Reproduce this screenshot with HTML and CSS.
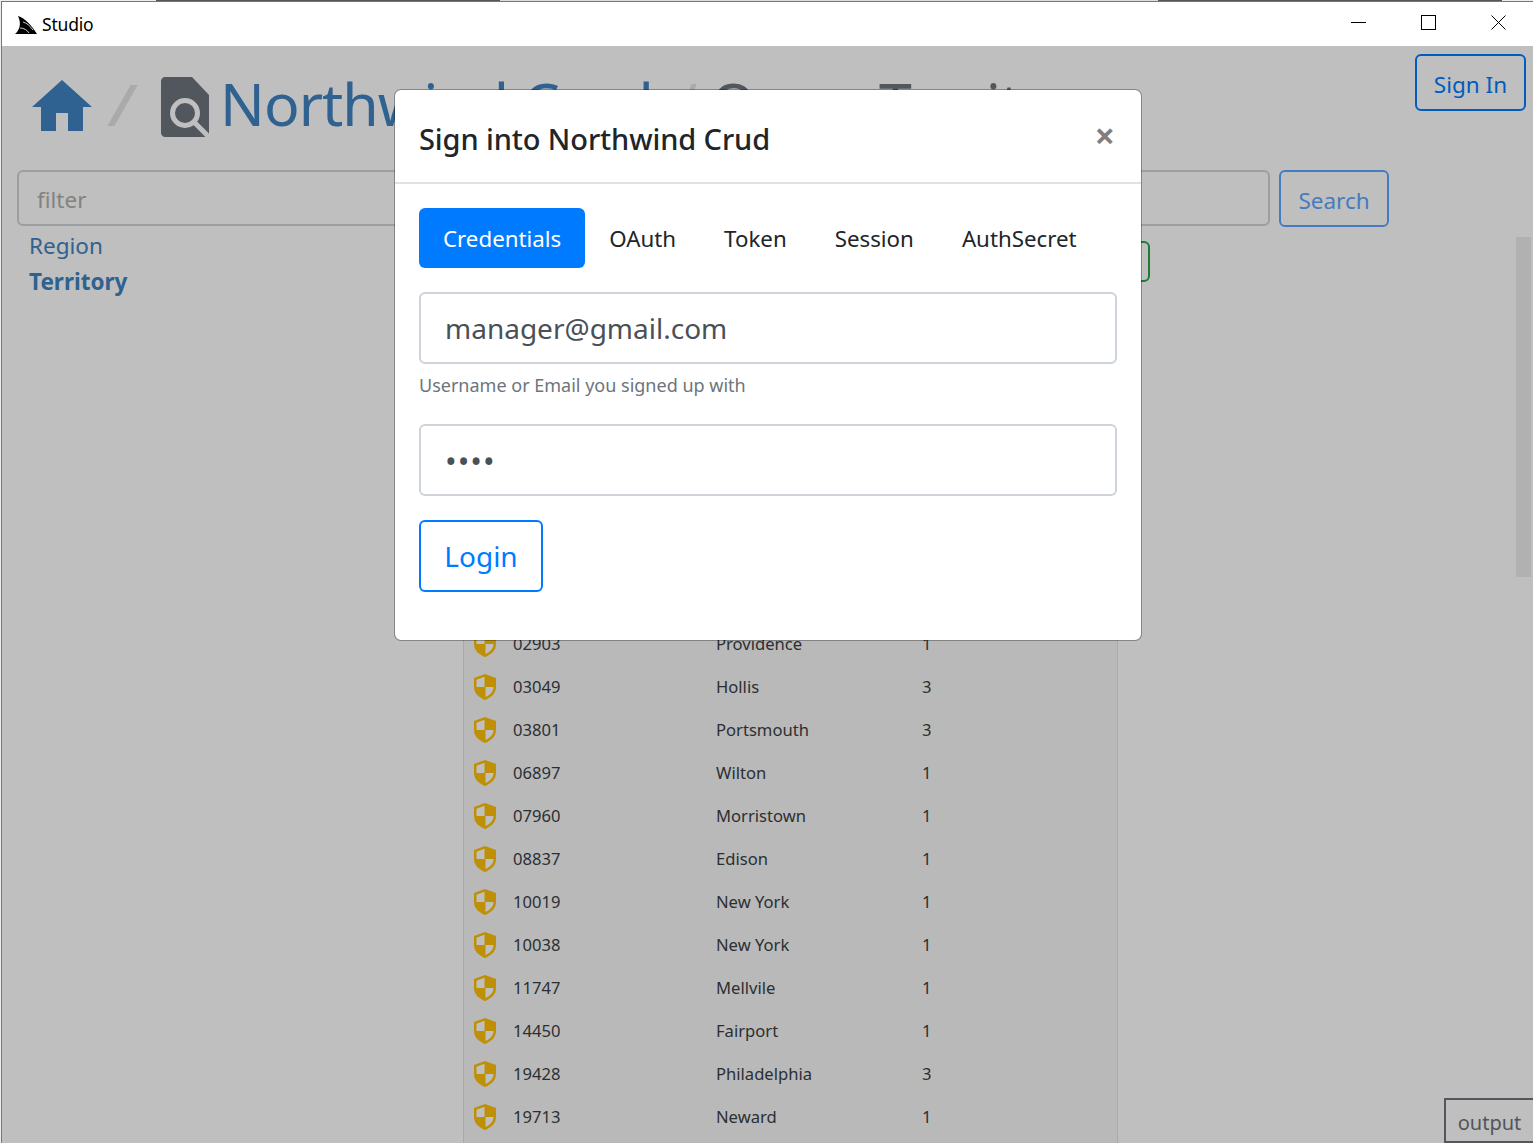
FILE: index.html
```html
<!DOCTYPE html>
<html lang="en">
<head>
<meta charset="utf-8">
<title>Studio</title>
<link rel="stylesheet" href="styles.css">
</head>
<body>
<svg class="defs" aria-hidden="true"><symbol id="shield" viewBox="0 0 22 26"><path fill="#ffc107" d="M11 0 22 4V13C22 20 16 24 11 26 6 24 0 20 0 13V4Z"/><path fill="#fff" d="M10.500 2.800 2.500 5.700V13H10.500ZM11.500 13H19.500C19.500 18 15 21.500 11.500 23Z"/></symbol></svg>
<div class="strip"><span class="seg light"></span><span class="seg dark"></span><span class="seg wide"></span><span class="seg dark"></span><span class="seg edge"></span></div>
<div class="window">
  <header class="titlebar">
    <svg class="logo" viewBox="0 0 22 18"><path d="M3 0C10 2 17 10 22 18H0C4 15 7 8 3 0Z"/><path class="logo-cut" d="M8 6C12 7 15 10 18 14M5 12C9 12 12 14 14 17"/></svg>
    <span class="app-name">Studio</span>
    <div class="controls">
      <svg class="ctl" viewBox="0 0 15 15"><path d="M0 7.500H15"/></svg>
      <svg class="ctl" viewBox="0 0 15 15"><rect x=".5" y=".5" width="14" height="14"/></svg>
      <svg class="ctl" viewBox="0 0 15 15"><path d="M.5.500 14.500 14.500M14.500.500.5 14.500"/></svg>
    </div>
  </header>
  <div class="content">
    <div class="crumbs">
      <svg class="home" viewBox="0 0 60 51"><path d="M30 0 60 27H51V51H36V33H24V51H9V27H0Z"/></svg>
      <span class="sep">/</span>
      <svg class="doc" viewBox="0 0 48 60"><path class="doc-body" d="M4 0H31L48 18V60H4C2 60 0 58 0 56V4C0 2 2 0 4 0Z"/><circle class="doc-lens" cx="24" cy="36" r="12.500"/><path class="doc-lens" d="M33 45 48 60"/></svg>
      <h1 class="crumb-title"><span class="crumb-db">Northwind Crud</span> <span class="sep-small">/</span> <span class="crumb-q">Query</span> <span class="crumb-t">Territory</span></h1>
    </div>
    <form class="search-row">
      <input class="filter" type="text" placeholder="filter">
      <button class="btn-search" type="button">Search</button>
    </form>
    <div class="columns">
      <nav class="side">
        <a class="side-link">Region</a>
        <a class="side-link active">Territory</a>
      </nav>
      <main class="main">
        <div class="toolbar"><button class="btn-green" type="button"></button></div>
        <div class="results">
          <div class="row"><svg class="shield"><use href="#shield"/></svg><span class="c-id">02903</span><span class="c-city">Providence</span><span class="c-num">1</span></div>
          <div class="row"><svg class="shield"><use href="#shield"/></svg><span class="c-id">03049</span><span class="c-city">Hollis</span><span class="c-num">3</span></div>
          <div class="row"><svg class="shield"><use href="#shield"/></svg><span class="c-id">03801</span><span class="c-city">Portsmouth</span><span class="c-num">3</span></div>
          <div class="row"><svg class="shield"><use href="#shield"/></svg><span class="c-id">06897</span><span class="c-city">Wilton</span><span class="c-num">1</span></div>
          <div class="row"><svg class="shield"><use href="#shield"/></svg><span class="c-id">07960</span><span class="c-city">Morristown</span><span class="c-num">1</span></div>
          <div class="row"><svg class="shield"><use href="#shield"/></svg><span class="c-id">08837</span><span class="c-city">Edison</span><span class="c-num">1</span></div>
          <div class="row"><svg class="shield"><use href="#shield"/></svg><span class="c-id">10019</span><span class="c-city">New York</span><span class="c-num">1</span></div>
          <div class="row"><svg class="shield"><use href="#shield"/></svg><span class="c-id">10038</span><span class="c-city">New York</span><span class="c-num">1</span></div>
          <div class="row"><svg class="shield"><use href="#shield"/></svg><span class="c-id">11747</span><span class="c-city">Mellvile</span><span class="c-num">1</span></div>
          <div class="row"><svg class="shield"><use href="#shield"/></svg><span class="c-id">14450</span><span class="c-city">Fairport</span><span class="c-num">1</span></div>
          <div class="row"><svg class="shield"><use href="#shield"/></svg><span class="c-id">19428</span><span class="c-city">Philadelphia</span><span class="c-num">3</span></div>
          <div class="row"><svg class="shield"><use href="#shield"/></svg><span class="c-id">19713</span><span class="c-city">Neward</span><span class="c-num">1</span></div>
        </div>
      </main>
    </div>
    <div class="scroll-thumb"></div>
    <button class="btn-output" type="button">output</button>
    <div class="backdrop"></div>
    <button class="btn-signin" type="button">Sign In</button>
    <section class="modal">
      <div class="modal-head">
        <h2 class="modal-title">Sign into Northwind Crud</h2>
        <span class="close">×</span>
      </div>
      <div class="modal-body">
        <ul class="tabs">
          <li class="tab active">Credentials</li>
          <li class="tab">OAuth</li>
          <li class="tab">Token</li>
          <li class="tab">Session</li>
          <li class="tab">AuthSecret</li>
        </ul>
        <div class="group">
          <input class="field" type="text" value="manager@gmail.com">
          <small class="hint">Username or Email you signed up with</small>
        </div>
        <div class="group">
          <input class="field pw" type="password" value="pass">
        </div>
        <button class="btn-login" type="button">Login</button>
      </div>
    </section>
  </div>
</div>
</body>
</html>
```

FILE: styles.css
```css
* { box-sizing: border-box; }
html, body { margin: 0; height: 100%; overflow: hidden; }
body { background: #ececec; font-family: "Noto Sans", "Open Sans", sans-serif; color: #212529; padding-left: 1px; }
.defs { width: 0; height: 0; position: absolute; }
.strip { display: flex; height: 2px; border-bottom: 1px solid #777; }
.seg { height: 1px; }
.light { flex: 0 0 155px; background: #eee; }
.dark { flex: 0 0 344px; background: #555; }
.wide { flex: 1; background: #ddd; }
.edge { flex: 0 0 31px; background: #eee; }
.window { height: 1141px; display: flex; flex-direction: column; border-left: 1px solid #777; }
.titlebar { flex: 0 0 44px; background: #fff; display: flex; align-items: center; padding-left: 13px; color: #000; }
.logo { width: 22px; height: 18px; margin-top: 1px; }
.logo-cut { fill: none; stroke: #fff; stroke-width: .8; }
.app-name { font-size: 17.5px; margin-left: 5px; letter-spacing: -.2px; }
.controls { margin-left: auto; display: flex; gap: 55px; padding-right: 27px; margin-top: -3px; }
.ctl { width: 15px; height: 15px; fill: none; stroke: #000; stroke-width: 1; }
.content { flex: 1; position: relative; overflow: hidden; background: #fff; }
.crumbs { height: 124px; display: flex; align-items: center; padding-left: 30px; }
.home { width: 60px; height: 51px; fill: #3f83c0; margin-bottom: 5px; }
.sep { font-size: 58px; color: #e3e3e3; margin: 0 28px 8px 18px; font-style: italic; line-height: 1; font-weight: 600; }
.doc { width: 48px; height: 60px; flex: none; margin-bottom: 2px; }
.doc-body { fill: #6c757d; }
.doc-lens { fill: none; stroke: #fff; stroke-width: 5; }
.crumb-title { margin: 0 0 10px 11px; font-size: 59px; font-weight: 400; white-space: nowrap; letter-spacing: -1px; line-height: 1; }
.crumb-db { color: #3f83c0; }
.sep-small { color: #e3e3e3; margin-left: 8px; }
.crumb-q { color: #6c757d; }
.crumb-t { color: #6c757d; margin-left: -11px; }
.search-row { height: 57px; display: flex; padding-left: 15px; }
.filter { width: 1253px; height: 56px; border: 2px solid #ced4da; border-radius: 6px; padding: 2px 18px 0; font: inherit; font-size: 22.5px; background: #fff; }
.filter::placeholder { color: #b0aeac; }
.btn-search { margin-left: 9px; width: 110px; height: 57px; border: 2px solid #5aa6ff; border-radius: 6px; background: #fff; color: #5aa6ff; font: inherit; font-size: 22.5px; padding: 3px 0 0; }
.columns { display: flex; }
.side { flex: 0 0 461px; padding: 1px 0 0 27px; display: flex; flex-direction: column; }
.side-link { font-size: 22.5px; line-height: 36px; color: #3f83c0; }
.side-link.active { font-weight: 700; }
.main { width: 687px; padding-top: 14px; }
.toolbar { display: flex; justify-content: flex-end; }
.btn-green { width: 120px; height: 41px; border: 2px solid #28a745; border-radius: 6px; background: #fff; }
.results { width: 655px; border: solid #e2e2e2; border-width: 0 1px; background: #f7f7f7; padding-top: 340px; height: 1000px; }
.row { height: 43px; display: flex; align-items: center; font-size: 16.6px; color: #3a3f44; padding-left: 10px; }
.shield { width: 22px; height: 26px; flex: none; margin-top: 1px; }
.c-id { width: 203px; margin-left: 17px; }
.c-city { width: 206px; }
.scroll-thumb { position: absolute; left: 1514px; top: 191px; width: 15px; height: 340px; background: #ededed; }
.btn-output { position: absolute; right: 0; bottom: 0; width: 89px; height: 45px; border: 2px solid #6c757d; border-right: 0; background: #fff; color: #6c757d; font: inherit; font-size: 20px; padding: 3px 0 0; }
.backdrop { position: absolute; inset: 0; background: rgba(0,0,0,.25); }
.btn-signin { position: absolute; top: 8px; right: 7px; width: 111px; height: 57px; background: transparent; border: 2px solid #005cbf; border-radius: 6px; color: #005cbf; font: inherit; font-size: 22.5px; padding: 3px 0 0; }
.modal { position: absolute; left: 392px; top: 43px; width: 748px; height: 552px; background: #fff; border: 1px solid rgba(0,0,0,.3); background-clip: padding-box; border-radius: 7px; }
.modal-head { height: 94px; border-bottom: 2px solid #dee2e6; display: flex; justify-content: space-between; align-items: flex-start; padding: 26px 26px 0 24px; }
.modal-title { margin: 0; font-size: 29px; font-weight: 500; line-height: 45px; letter-spacing: -.1px; }
.close { font-size: 36px; font-weight: 700; line-height: 45px; margin-top: -3px; color: rgba(0,0,0,.5); }
.modal-body { padding: 24px; }
.tabs { list-style: none; margin: 0 0 24px; padding: 0; display: flex; gap: 0; }
.tab { font-size: 22.3px; line-height: 58px; padding: 2px 24px 0; border-radius: 6px; }
.tab.active { background: #007bff; color: #fff; }
.group { margin-bottom: 24px; }
.field { display: block; width: 100%; height: 72px; border: 2px solid #ced4da; border-radius: 6px; padding: 0 24px; font: inherit; font-size: 28px; color: #495057; }
.field.pw { font-size: 31px; letter-spacing: 1px; padding-top: 1px; }
.hint { display: block; margin-top: 6px; font-size: 18px; line-height: 30px; color: #6c757d; }
.btn-login { width: 124px; height: 72px; background: #fff; border: 2px solid #007bff; border-radius: 6px; color: #007bff; font: inherit; font-size: 28px; padding: 0; }
```
